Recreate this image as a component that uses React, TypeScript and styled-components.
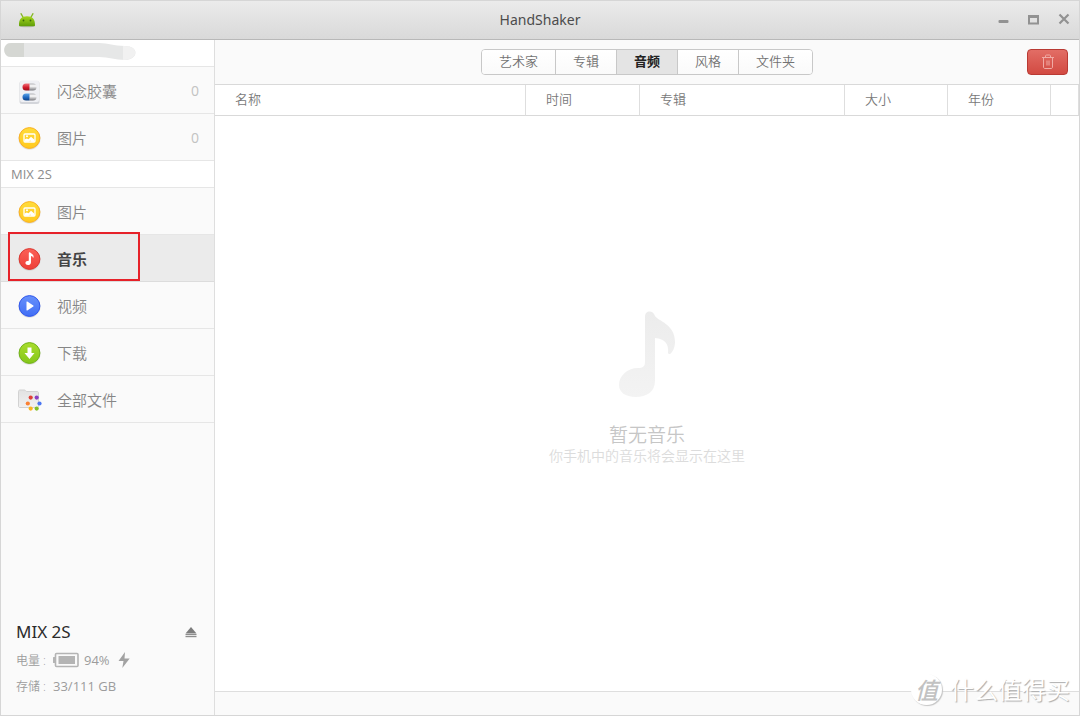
import React from "react";
import styled, { createGlobalStyle, css } from "styled-components";

const Global = createGlobalStyle`
  *, *::before, *::after { box-sizing: border-box; }
  body { margin: 0; background: #fff; }
  body, button, table { font-family: "Open Sans", "Noto Sans CJK SC", sans-serif; }
  button { margin: 0; padding: 0; border: 0; background: none; color: inherit; cursor: pointer; }
  ul, h1, h2, p { margin: 0; padding: 0; list-style: none; font-weight: 400; }
  svg { display: block; flex: none; }
`;

const line = "#dedede";

const Window = styled.div`
  position: relative;
  min-height: 100vh;
  display: flex;
  flex-direction: column;
  border: 1px solid #d6d6d6;
  background: #fafafa;
`;

const TitleBar = styled.header`
  height: 39px;
  display: grid;
  grid-template-columns: 1fr auto 1fr;
  align-items: center;
  padding: 0 7px;
  border-bottom: 1px solid #b8b8b8;
  background: linear-gradient(#ebebeb, #d9d9d9);
`;

const AppBadge = styled.div`
  padding-left: 10px;
`;

const Title = styled.h1`
  font-family: "Noto Sans", sans-serif;
  font-size: 14px;
  line-height: 20px;
  color: #4c4c4c;
`;

const WindowControls = styled.div`
  display: flex;
  justify-content: flex-end;
  gap: 14px;
`;

const ControlButton = styled.button`
  width: 16px;
  height: 16px;
  display: grid;
  place-items: center;
`;

const Body = styled.div`
  flex: 1;
  display: flex;
`;

const Sidebar = styled.aside`
  flex: none;
  width: 214px;
  display: flex;
  flex-direction: column;
  border-right: 1px solid ${line};
`;

const SectionHead = styled.h2`
  height: 27px;
  display: flex;
  align-items: center;
  padding: 0 10px;
  border-bottom: 1px solid #e6e6e6;
  background: #fff;
  font-size: 13px;
  line-height: 18px;
  color: #8c8c8c;
`;

const HiddenName = styled(SectionHead)`
  padding: 0 2px;
  align-items: flex-start;
`;

const NavItem = styled.li`
  position: relative;
`;

const NavButton = styled.button<{ $active?: boolean }>`
  width: 100%;
  height: 47px;
  display: flex;
  align-items: center;
  padding: 2px 15px 0;
  border-bottom: 1px solid #e6e6e6;
  font-size: 15px;
  line-height: 22px;
  font-weight: 350;
  color: #868686;
  ${(p) =>
    p.$active &&
    css`
      background: #ebebeb;
      border-bottom-color: #dcdcdc;
      font-weight: 700;
      color: #444;
    `}
`;

const NavLabel = styled.span`
  margin-left: 15px;
  padding-bottom: 1px;
`;

const Count = styled.span`
  margin-left: auto;
  font-size: 14px;
  font-weight: 400;
  color: #c2c2c2;
`;

const Marker = styled.div`
  position: absolute;
  left: 7px;
  top: -3px;
  width: 132px;
  height: 49px;
  border: 2px solid #e62129;
  pointer-events: none;
`;

const Device = styled.section`
  margin-top: auto;
  padding: 0 15px 16px;
  font-size: 13px;
  color: #9c9c9c;
`;

const DeviceHead = styled.div`
  display: flex;
  align-items: center;
  justify-content: space-between;
  height: 30px;
`;

const DeviceName = styled.h2`
  font-family: "Noto Sans", sans-serif;
  font-size: 17px;
  line-height: 24px;
  color: #2b2b2b;
`;

const Stat = styled.p`
  height: 26px;
  display: flex;
  align-items: center;
  gap: 5px;
`;

const StatLabel = styled.span`
  width: 32px;
  font-size: 12px;
  font-weight: 350;
  white-space: nowrap;
`;

const Main = styled.main`
  flex: 1;
  min-width: 0;
  display: flex;
  flex-direction: column;
`;

const Toolbar = styled.div`
  height: 45px;
  display: grid;
  grid-template-columns: 1fr auto 1fr;
  align-items: center;
  padding: 0 11px;
  border-bottom: 1px solid #d9d9d9;
`;

const Tabs = styled.div`
  grid-column: 2;
  display: flex;
  border: 1px solid #c8c8c8;
  border-radius: 4px;
  overflow: hidden;
`;

const Tab = styled.button<{ $active?: boolean }>`
  height: 24px;
  padding: 0 17px 2px;
  font-size: 13px;
  line-height: 20px;
  font-weight: ${(p) => (p.$active ? 700 : 350)};
  color: ${(p) => (p.$active ? "#222" : "#737373")};
  background: ${(p) => (p.$active ? "#e4e4e4" : "linear-gradient(#fff, #fafafa)")};
  & + & {
    border-left: 1px solid #c8c8c8;
  }
`;

const DeleteButton = styled.button`
  justify-self: end;
  width: 41px;
  height: 26px;
  display: grid;
  place-items: center;
  border: 1px solid #b93a34;
  border-radius: 4px;
  background: linear-gradient(#e26d65, #d24a42);
`;

const Table = styled.table`
  width: 100%;
  table-layout: fixed;
  border-collapse: separate;
  border-spacing: 0;
  background: #fff;
`;

const Head = styled.th<{ $width?: number }>`
  width: ${(p) => (p.$width ? `${p.$width}px` : "auto")};
  height: 31px;
  padding: 0 0 2px 20px;
  border-right: 1px solid ${line};
  border-bottom: 1px solid #d9d9d9;
  text-align: left;
  font-size: 13px;
  line-height: 20px;
  font-weight: 350;
  color: #787878;
`;

const Empty = styled.div`
  flex: 1;
  display: flex;
  flex-direction: column;
  align-items: center;
  justify-content: center;
  padding-bottom: 32px;
  background: #fff;
`;

const EmptyTitle = styled.p`
  margin-top: 23px;
  font-size: 19px;
  line-height: 24px;
  font-weight: 350;
  color: #c6c6c6;
`;

const EmptyText = styled.p`
  font-size: 14px;
  line-height: 18px;
  font-weight: 350;
  color: #dcdcdc;
`;

const StatusBar = styled.footer`
  height: 24px;
  border-top: 1px solid ${line};
`;

const Watermark = styled.div`
  position: absolute;
  right: 9px;
  bottom: 9px;
  display: flex;
  align-items: center;
  gap: 8px;
  font-size: 24px;
  line-height: 34px;
  font-family: "Noto Sans CJK SC", sans-serif;
  font-weight: 350;
  color: #fff;
  text-shadow: 1px 1px 1px #aaa;
`;

const Seal = styled.span`
  width: 31px;
  height: 31px;
  display: grid;
  place-items: center;
  border-radius: 50%;
  background: #fff;
  box-shadow: 1px 1px 1px #c4c4c4;
  font-size: 23px;
  line-height: 28px;
  font-style: italic;
  font-weight: 500;
  color: #c2c2c2;
  text-shadow: none;
`;

const AndroidIcon = () => (
  <svg width="18" height="16" viewBox="0 0 18 16" aria-hidden="true">
    <defs>
      <linearGradient id="android" x1="0" y1="0" x2="0" y2="1">
        <stop offset="0" stopColor="#a4d51e" />
        <stop offset="1" stopColor="#5e9c08" />
      </linearGradient>
    </defs>
    <ellipse cx="9" cy="14.500" rx="7.500" ry="0.800" fill="#bababa" />
    <path d="M3 1.700 5.200 5.500M15 1.700 12.800 5.500" stroke="#84b822" strokeWidth="1.300" strokeLinecap="round" />
    <path d="M1 13.200C.8 7.500 3.500 4.300 9 4.300s8.200 3.200 8 8.900c0 .8-.5 1.100-1.200 1.100H2.200c-.7 0-1.200-.3-1.200-1.100Z" fill="url(#android)" />
    <circle cx="5.500" cy="8.500" r="0.900" fill="#38690a" />
    <circle cx="12.500" cy="8.500" r="0.900" fill="#38690a" />
  </svg>
);

const CapsuleIcon = () => (
  <svg width="26" height="26" viewBox="0 0 26 26" aria-hidden="true">
    <defs>
      <linearGradient id="pillRed" x1="0" y1="0" x2="0" y2="1">
        <stop offset="0" stopColor="#f0727c" />
        <stop offset=".6" stopColor="#cf1526" />
        <stop offset="1" stopColor="#94101b" />
      </linearGradient>
      <linearGradient id="pillBlue" x1="0" y1="0" x2="0" y2="1">
        <stop offset="0" stopColor="#5ba4e8" />
        <stop offset=".6" stopColor="#1b64bd" />
        <stop offset="1" stopColor="#0d3f80" />
      </linearGradient>
      <linearGradient id="pillWhite" x1="0" y1="0" x2="0" y2="1">
        <stop offset="0" stopColor="#b4b4b8" />
        <stop offset=".35" stopColor="#fff" />
        <stop offset="1" stopColor="#77777c" />
      </linearGradient>
    </defs>
    <rect x="3.500" y="3" width="20" height="23" rx="2.500" fill="#d3d5da" />
    <rect x="4" y="2.500" width="19" height="21.500" rx="2" fill="#eff0f4" />
    <path d="M13.500 5.500H17a3.500 3.500 0 0 1 0 7h-3.500Z" fill="url(#pillWhite)" />
    <path d="M13.500 5.500H10a3.500 3.500 0 0 0 0 7h3.500Z" fill="url(#pillRed)" />
    <path d="M13.500 15.500H17a3.500 3.500 0 0 1 0 7h-3.500Z" fill="url(#pillWhite)" />
    <path d="M13.500 15.500H10a3.500 3.500 0 0 0 0 7h3.500Z" fill="url(#pillBlue)" />
  </svg>
);

type DiscProps = { id: string; top: string; bottom: string; edge: string; children: React.ReactNode };

const Disc = ({ id, top, bottom, edge, children }: DiscProps) => (
  <svg width="26" height="26" viewBox="0 0 26 26" aria-hidden="true">
    <defs>
      <linearGradient id={id} x1="0" y1="0" x2="0" y2="1">
        <stop offset="0" stopColor={top} />
        <stop offset="1" stopColor={bottom} />
      </linearGradient>
    </defs>
    <circle cx="13.500" cy="13.700" r="11" fill="#000" opacity=".1" />
    <circle cx="13.500" cy="13" r="10.400" fill={`url(#${id})`} stroke={edge} />
    {children}
  </svg>
);

const PhotoIcon = ({ id }: { id: string }) => (
  <Disc id={id} top="#ffdc3a" bottom="#ffc91f" edge="#fbb01e">
    <rect x="8" y="9" width="11" height="8" rx="1" fill="none" stroke="#fff" strokeWidth="1.300" />
    <path d="M8.500 16.800v-2.300l2.300-1 1.700.700 2.500-2.500 3.500 3v2.100h-3l-1.300-1.300-1.700 1.300Z" fill="#fff" />
    <circle cx="11" cy="11.300" r="1" fill="#fff" />
  </Disc>
);

const MusicIcon = () => (
  <Disc id="music" top="#fb6157" bottom="#ee3f38" edge="#dc352f">
    <path
      d="M12.800 7.300c0-1.500 1.400-1.400 1.700-.5.500 1 3.100 1.400 3.100 3.800 0 .7-.2 1.200-.6 1.500 0-1.400-.8-2-2-2.100v6.200c0 3.700-5.600 3.700-5.600.9 0-1.700 1.600-2.300 3.400-2.400Z"
      fill="#fff"
    />
  </Disc>
);

const VideoIcon = () => (
  <Disc id="video" top="#6791fb" bottom="#416ef5" edge="#2d55ed">
    <path d="M10.500 9v8a.5.500 0 0 0 .800.400l6-3.900a.6.600 0 0 0 0-1l-6-3.900a.5.500 0 0 0-.800.400Z" fill="#fff" />
  </Disc>
);

const DownloadIcon = () => (
  <Disc id="download" top="#a9dc2c" bottom="#85c71a" edge="#70b315">
    <path d="M11.500 7.500h4v5.500h3l-5 6-5-6h3Z" fill="#fff" />
  </Disc>
);

const FilesIcon = () => (
  <svg width="26" height="26" viewBox="0 0 26 26" aria-hidden="true">
    <defs>
      <linearGradient id="folder" x1="0" y1="0" x2="0" y2="1">
        <stop offset="0" stopColor="#e2e2e2" />
        <stop offset="1" stopColor="#f1f1f1" />
      </linearGradient>
    </defs>
    <path
      d="M2.500 19V4.500C2.500 3.500 3.200 3 4 3h4.500c1 0 1.300 1.500 2.300 1.500H21c1 0 1.500.5 1.500 1.500v13c0 1-.5 1.500-1.500 1.500H4c-1 0-1.500-.5-1.500-1.500Z"
      fill="url(#folder)"
      stroke="#d2d2d2"
    />
    <circle cx="14.700" cy="10.600" r="2.100" fill="#e04035" />
    <circle cx="20.700" cy="10.600" r="2.100" fill="#8a3fc2" />
    <circle cx="11.800" cy="16.500" r="2.100" fill="#fa8134" />
    <circle cx="23.500" cy="16.500" r="2.100" fill="#4a76f2" />
    <circle cx="14.700" cy="21.600" r="2.100" fill="#fbb41f" />
    <circle cx="20.700" cy="21.600" r="2.100" fill="#82bf27" />
  </svg>
);

type Entry = { label: string; icon: React.ReactNode; count?: number; active?: boolean };

const cloudItems: Entry[] = [
  { label: "闪念胶囊", icon: <CapsuleIcon />, count: 0 },
  { label: "图片", icon: <PhotoIcon id="cloudPhoto" />, count: 0 },
];

const deviceItems: Entry[] = [
  { label: "图片", icon: <PhotoIcon id="devicePhoto" /> },
  { label: "音乐", icon: <MusicIcon />, active: true },
  { label: "视频", icon: <VideoIcon /> },
  { label: "下载", icon: <DownloadIcon /> },
  { label: "全部文件", icon: <FilesIcon /> },
];

const tabs = ["艺术家", "专辑", "音频", "风格", "文件夹"];

const NavList = ({ items }: { items: Entry[] }) => (
  <ul>
    {items.map((item) => (
      <NavItem key={item.label}>
        <NavButton type="button" $active={item.active} aria-current={item.active ? "page" : undefined}>
          {item.icon}
          <NavLabel>{item.label}</NavLabel>
          {item.count !== undefined && <Count>{item.count}</Count>}
        </NavButton>
        {item.active && <Marker />}
      </NavItem>
    ))}
  </ul>
);

export default function App() {
  return (
    <Window>
      <Global />
      <TitleBar>
        <AppBadge>
          <AndroidIcon />
        </AppBadge>
        <Title>HandShaker</Title>
        <WindowControls>
          <ControlButton type="button" aria-label="最小化">
            <svg width="16" height="16" viewBox="0 0 16 16">
              <rect x="2.500" y="8" width="10" height="3" rx="1" fill="#929292" />
            </svg>
          </ControlButton>
          <ControlButton type="button" aria-label="最大化">
            <svg width="16" height="16" viewBox="0 0 16 16">
              <path d="M2 3h11v9.500H2ZM4 6v4.500h7V6Z" fill="#929292" fillRule="evenodd" />
            </svg>
          </ControlButton>
          <ControlButton type="button" aria-label="关闭">
            <svg width="16" height="16" viewBox="0 0 16 16">
              <path d="m3.500 2.500 9 9M12.500 2.500l-9 9" stroke="#929292" strokeWidth="2.200" />
            </svg>
          </ControlButton>
        </WindowControls>
      </TitleBar>
      <Body>
        <Sidebar>
          <HiddenName aria-label="账户">
            <svg width="134" height="22" viewBox="0 0 134 22" aria-hidden="true">
              <path d="M8 3h88c10 0 14 3 26 3 14 0 14 13 0 14-10 0-16-3-26-3H8C-1 17-1 3 8 3Z" fill="#e6e7e7" />
              <path d="M21 3H8C-1 3-1 17 8 17h13Z" fill="#d5d7d3" />
              <path d="M120 6c16-1 16 13 2 14l-2-.1Z" fill="#f1f1f1" />
            </svg>
          </HiddenName>
          <nav>
            <NavList items={cloudItems} />
            <SectionHead>MIX 2S</SectionHead>
            <NavList items={deviceItems} />
          </nav>
          <Device>
            <DeviceHead>
              <DeviceName>MIX 2S</DeviceName>
              <ControlButton type="button" aria-label="弹出">
                <svg width="12" height="12" viewBox="0 0 12 12">
                  <path d="M6 1 11.500 7.500H.5Z" fill="#7d7d7d" />
                  <rect x="0.500" y="8" width="11" height="1.200" fill="#8e8e8e" />
                  <rect x="0.500" y="10" width="11" height="1.200" fill="#8e8e8e" />
                </svg>
              </ControlButton>
            </DeviceHead>
            <Stat>
              <StatLabel>电量 :</StatLabel>
              <svg width="26" height="16" viewBox="0 0 26 16" aria-hidden="true">
                <rect x="2.500" y="1.500" width="22.500" height="13" rx="1" fill="none" stroke="#b4b4b4" strokeWidth="1.600" />
                <rect x="0" y="5" width="2.500" height="6" rx="0.500" fill="#b4b4b4" />
                <rect x="5.500" y="4" width="16.500" height="8" fill="#b4b4b4" />
              </svg>
              <span>94%</span>
              <svg width="18" height="18" viewBox="0 0 18 18" aria-hidden="true">
                <path d="M10 1 3.500 10h5L7.300 17 14.700 7.500H9.500Z" fill="#a2a2a2" />
              </svg>
            </Stat>
            <Stat>
              <StatLabel>存储 :</StatLabel>
              <span>33/111 GB</span>
            </Stat>
          </Device>
        </Sidebar>
        <Main>
          <Toolbar>
            <Tabs>
              {tabs.map((label) => (
                <Tab key={label} type="button" $active={label === "音频"} aria-pressed={label === "音频"}>
                  {label}
                </Tab>
              ))}
            </Tabs>
            <DeleteButton type="button" aria-label="删除">
              <svg width="14" height="16" viewBox="0 0 14 16" fill="none" stroke="#f0aaa5">
                <path d="M1 3.500h12M4.500 3.500V2c0-.6.400-1 1-1h3c.6 0 1 .4 1 1v1.500M2.500 3.500V13c0 1 .6 1.500 1.500 1.500h6c.9 0 1.500-.5 1.500-1.500V3.500M6 6.500v5M8 6.500v5" />
              </svg>
            </DeleteButton>
          </Toolbar>
          <Table>
            <thead>
              <tr>
                <Head scope="col">名称</Head>
                <Head scope="col" $width={114}>时间</Head>
                <Head scope="col" $width={205}>专辑</Head>
                <Head scope="col" $width={103}>大小</Head>
                <Head scope="col" $width={103}>年份</Head>
                <Head $width={28} />
              </tr>
            </thead>
          </Table>
          <Empty>
            <svg width="58" height="90" viewBox="0 0 58 90" aria-hidden="true">
              <defs>
                <linearGradient id="note" x1="0" y1="0" x2="0" y2="1">
                  <stop offset="0" stopColor="#ececec" />
                  <stop offset="1" stopColor="#f3f3f3" />
                </linearGradient>
              </defs>
              <path
                d="M27 7C27 0 35 0 37 6c3 5 20 8 20 26 0 6-3 11-5 12-1 0-2-.4-2-1 1-9-3-14-13-15v43c0 11-9 16-19 16C7 87 1 82 1 75c0-9 8-17 19-17 5 0 7-2 7-6Z"
                fill="url(#note)"
              />
            </svg>
            <EmptyTitle>暂无音乐</EmptyTitle>
            <EmptyText>你手机中的音乐将会显示在这里</EmptyText>
          </Empty>
          <StatusBar />
        </Main>
      </Body>
      <Watermark>
        <Seal>值</Seal>
        <span>什么值得买</span>
      </Watermark>
    </Window>
  );
}
